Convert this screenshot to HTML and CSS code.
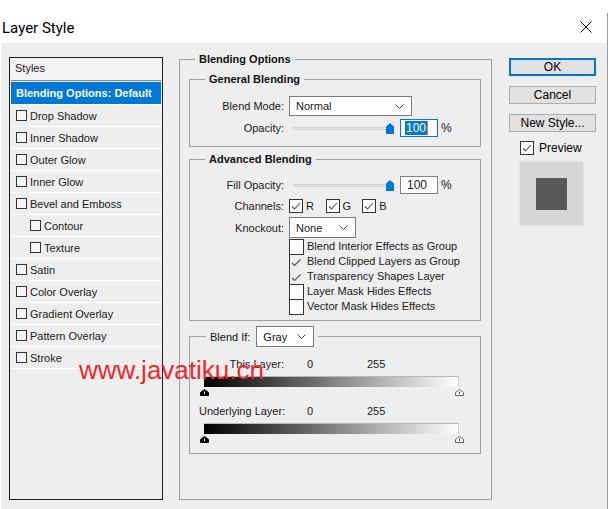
FILE: index.html
```html
<!DOCTYPE html>
<html lang="en">
<head>
    <meta charset="UTF-8">
    <title>Layer Style</title>
    <link rel="stylesheet" href="styles.css">
</head>
<body>
<div class="window">
    <div class="titlebar">
        <span class="title">Layer Style</span>
        <svg class="close" width="12" height="12" viewBox="0 0 12 12"><path d="M0.5 0.5 L11.5 11.5 M11.5 0.5 L0.5 11.5" stroke="#000" stroke-width="1" fill="none"/></svg>
    </div>
    <div class="dialog">
        <div class="styles-panel">
            <div class="styles-head">Styles</div>
            <div class="style-item selected">Blending Options: Default</div>
            <div class="style-item"><span class="box"></span>Drop Shadow</div>
            <div class="style-item"><span class="box"></span>Inner Shadow</div>
            <div class="style-item"><span class="box"></span>Outer Glow</div>
            <div class="style-item"><span class="box"></span>Inner Glow</div>
            <div class="style-item"><span class="box"></span>Bevel and Emboss</div>
            <div class="style-item sub"><span class="box"></span>Contour</div>
            <div class="style-item sub"><span class="box"></span>Texture</div>
            <div class="style-item"><span class="box"></span>Satin</div>
            <div class="style-item"><span class="box"></span>Color Overlay</div>
            <div class="style-item"><span class="box"></span>Gradient Overlay</div>
            <div class="style-item"><span class="box"></span>Pattern Overlay</div>
            <div class="style-item"><span class="box"></span>Stroke</div>
        </div>

        <fieldset class="group outer">
            <legend>Blending Options</legend>

            <fieldset class="group">
                <legend>General Blending</legend>
                <div class="row first h20">
                    <span class="lbl">Blend Mode:</span>
                    <div class="select mode">
                        <span>Normal</span>
                        <svg width="9" height="5" viewBox="0 0 9 5"><path d="M0.5 0.5 L4.5 4.5 L8.5 0.5" stroke="#444" fill="none"/></svg>
                    </div>
                </div>
                <div class="row gap3 h18">
                    <span class="lbl">Opacity:</span>
                    <div class="slider">
                        <div class="track"></div>
                        <svg class="thumb" width="8" height="11" viewBox="0 0 8 11"><path d="M4 0 L8 3.5 L8 11 L0 11 L0 3.5 Z" fill="#0078d7"/></svg>
                    </div>
                    <div class="num focus"><span class="hl">100</span><span class="caret"></span></div>
                    <span class="pct">%</span>
                </div>
            </fieldset>

            <fieldset class="group advanced">
                <legend>Advanced Blending</legend>
                <div class="row first h18">
                    <span class="lbl">Fill Opacity:</span>
                    <div class="slider">
                        <div class="track"></div>
                        <svg class="thumb" width="8" height="11" viewBox="0 0 8 11"><path d="M4 0 L8 3.5 L8 11 L0 11 L0 3.5 Z" fill="#0078d7"/></svg>
                    </div>
                    <div class="num">100</div>
                    <span class="pct">%</span>
                </div>
                <div class="row gap4 h15">
                    <span class="lbl">Channels:</span>
                    <span class="chan"><span class="cb checked"><svg width="12" height="12" viewBox="0 0 12 12"><path d="M2 6.5 L4.5 9 L10 3" stroke="#555" stroke-width="1.1" fill="none"/></svg></span>R</span>
                    <span class="chan"><span class="cb checked"><svg width="12" height="12" viewBox="0 0 12 12"><path d="M2 6.5 L4.5 9 L10 3" stroke="#555" stroke-width="1.1" fill="none"/></svg></span>G</span>
                    <span class="chan"><span class="cb checked"><svg width="12" height="12" viewBox="0 0 12 12"><path d="M2 6.5 L4.5 9 L10 3" stroke="#555" stroke-width="1.1" fill="none"/></svg></span>B</span>
                </div>
                <div class="row gap4 h21">
                    <span class="lbl">Knockout:</span>
                    <div class="select knock">
                        <span>None</span>
                        <svg width="9" height="5" viewBox="0 0 9 5"><path d="M0.5 0.5 L4.5 4.5 L8.5 0.5" stroke="#444" fill="none"/></svg>
                    </div>
                </div>
                <div class="options">
                    <div class="opt"><span class="cb tall"></span>Blend Interior Effects as Group</div>
                    <div class="opt"><span class="cb tall ghost"><svg width="13" height="13" viewBox="0 0 13 13"><path d="M2 7 L4.5 9.5 L10.5 3.5" stroke="#555" stroke-width="1.1" fill="none"/></svg></span>Blend Clipped Layers as Group</div>
                    <div class="opt"><span class="cb tall ghost"><svg width="13" height="13" viewBox="0 0 13 13"><path d="M2 7 L4.5 9.5 L10.5 3.5" stroke="#555" stroke-width="1.1" fill="none"/></svg></span>Transparency Shapes Layer</div>
                    <div class="opt"><span class="cb tall"></span>Layer Mask Hides Effects</div>
                    <div class="opt"><span class="cb tall"></span>Vector Mask Hides Effects</div>
                </div>
            </fieldset>

            <fieldset class="group blendif">
                <legend>
                    <span class="blendif-lbl">Blend If:</span>
                    <span class="select gray">
                        <span>Gray</span>
                        <svg width="9" height="5" viewBox="0 0 9 5"><path d="M0.5 0.5 L4.5 4.5 L8.5 0.5" stroke="#444" fill="none"/></svg>
                    </span>
                </legend>
                <div class="range-row first">
                    <span class="lbl">This Layer:</span>
                    <span class="v0">0</span>
                    <span>255</span>
                </div>
                <div class="ramp"></div>
                <div class="tris">
                    <svg width="9" height="7" viewBox="0 0 9 7"><path d="M4.5 0.5 L8.5 3.5 L8.5 6.5 L0.5 6.5 L0.5 3.5 Z" fill="#000" stroke="#000"/><path d="M4.5 2.5 V5" stroke="#fff"/></svg>
                    <svg width="9" height="7" viewBox="0 0 9 7"><path d="M4.5 0.5 L8.5 3.5 L8.5 6.5 L0.5 6.5 L0.5 3.5 Z" fill="#fff" stroke="#666"/><path d="M4.5 2.5 V5" stroke="#444"/></svg>
                </div>
                <div class="range-row">
                    <span class="lbl">Underlying Layer:</span>
                    <span class="v0">0</span>
                    <span>255</span>
                </div>
                <div class="ramp"></div>
                <div class="tris">
                    <svg width="9" height="7" viewBox="0 0 9 7"><path d="M4.5 0.5 L8.5 3.5 L8.5 6.5 L0.5 6.5 L0.5 3.5 Z" fill="#000" stroke="#000"/><path d="M4.5 2.5 V5" stroke="#fff"/></svg>
                    <svg width="9" height="7" viewBox="0 0 9 7"><path d="M4.5 0.5 L8.5 3.5 L8.5 6.5 L0.5 6.5 L0.5 3.5 Z" fill="#fff" stroke="#666"/><path d="M4.5 2.5 V5" stroke="#444"/></svg>
                </div>
            </fieldset>
        </fieldset>

        <div class="side">
            <div class="btn default">OK</div>
            <div class="btn">Cancel</div>
            <div class="btn">New Style...</div>
            <div class="preview-row">
                <span class="cb checked"><svg width="12" height="12" viewBox="0 0 12 12"><path d="M2 6.5 L4.5 9 L10 3" stroke="#555" stroke-width="1.1" fill="none"/></svg></span>
                Preview
            </div>
            <div class="swatch"><div class="swatch-inner"></div></div>
        </div>
    </div>
    <div class="watermark">www.javatiku.cn</div>
</div>
</body>
</html>
```

FILE: styles.css
```css
body {
    margin: 0;
    background: #fff;
    font-family: "Liberation Sans", Arial, sans-serif;
    font-size: 11px;
    color: #1a1a1a;
}
.window {
    position: relative;
    width: 607px;
    margin-top: 13px;
    border-right: 1px solid #9a9a9a;
}
.titlebar {
    height: 30px;
    display: flex;
    justify-content: space-between;
    align-items: center;
    padding: 0 15px 0 2px;
}
.title {
    font-family: Roboto, sans-serif;
    font-size: 15px;
    line-height: 30px;
    color: #000;
}
.close {
    margin-bottom: 2px;
}
.dialog {
    margin-left: 1px;
    height: 466px;
    box-sizing: border-box;
    padding: 0 0 9px 8px;
    background: #eeeeee;
    display: flex;
    align-items: stretch;
}

/* styles list */
.styles-panel {
    width: 154px;
    box-sizing: border-box;
    margin-top: 14px;
    border: 1px solid #1e1e1e;
    padding: 0 1px;
}
.styles-head {
    height: 22px;
    line-height: 21px;
    padding-left: 4px;
    border-bottom: 1px solid #8a8a8a;
    margin-bottom: 1px;
    background: #f2f2f2;
}
.style-item {
    height: 21px;
    border-bottom: 1px solid #fff;
    display: flex;
    align-items: center;
    padding-left: 5px;
    white-space: nowrap;
}
.style-item.selected {
    height: 22px;
    background: #0078d7;
    color: #fff;
    font-weight: bold;
}
.style-item.sub {
    padding-left: 19px;
}
.box {
    width: 11px;
    height: 11px;
    box-sizing: border-box;
    border: 1px solid #333;
    background: #f6f6f6;
    margin-right: 3px;
}

/* group boxes */
.group {
    margin: 0;
    padding: 0 9px;
    border: 1px solid #a0a0a0;
    min-width: 0;
}
.group legend {
    padding: 0 4px;
    margin-left: 6px;
    font-weight: bold;
    line-height: 13px;
    color: #111;
}
.outer {
    width: 313px;
    box-sizing: border-box;
    margin: 10px 0 0 16px;
    padding: 0 10px 0 9px;
}
.outer > .group {
    margin-top: 7px;
    padding-bottom: 9px;
}
.outer > .advanced {
    margin-top: 6px;
    padding-bottom: 6px;
}
.outer > .blendif {
    margin-top: 5px;
    padding-bottom: 10px;
}

.row {
    display: flex;
    align-items: center;
}
.row.first { margin-top: 10px; }
.row.gap3 { margin-top: 3px; }
.row.gap4 { margin-top: 4px; }
.h15 { height: 15px; }
.h18 { height: 18px; }
.h20 { height: 20px; }
.h21 { height: 21px; }
.lbl {
    width: 85px;
    text-align: right;
    margin-right: 5px;
    flex: none;
    white-space: nowrap;
}

.select {
    display: flex;
    align-items: center;
    justify-content: space-between;
    box-sizing: border-box;
    height: 100%;
    padding: 0 7px 0 6px;
    background: #fff;
    border: 1px solid #7a7a7a;
    font-size: 11px;
}
.select.mode { width: 123px; }
.select.knock { width: 67px; }

.slider {
    position: relative;
    width: 101px;
    height: 11px;
    margin-left: 4px;
    display: flex;
    align-items: center;
}
.track {
    width: 96px;
    height: 3px;
    background: #e4e4e4;
    border: 1px solid #d2d2d2;
    box-sizing: border-box;
}
.thumb {
    position: absolute;
    right: 0;
    top: 0;
}
.num {
    width: 38px;
    height: 18px;
    box-sizing: border-box;
    margin-left: 6px;
    padding-left: 6px;
    border: 1px solid #828282;
    background: #fff;
    font-size: 12px;
    line-height: 16px;
    display: flex;
    align-items: center;
}
.num.focus {
    border-color: #0078d7;
    padding-left: 4px;
}
.hl {
    background: #0078d7;
    color: #fff;
    padding: 0 1px;
    line-height: 14px;
}
.caret {
    width: 1px;
    height: 14px;
    background: #e8741c;
}
.pct {
    margin-left: 3px;
    font-size: 12px;
}

.cb {
    width: 14px;
    height: 14px;
    box-sizing: border-box;
    border: 1px solid #333;
    background: #fff;
    display: inline-flex;
    align-items: center;
    justify-content: center;
    flex: none;
}
.chan {
    width: 36.6px;
    display: flex;
    align-items: center;
}
.chan .cb {
    margin-right: 3px;
}

.options {
    margin-top: 1px;
    padding-left: 90px;
}
.opt {
    height: 15px;
    display: flex;
    align-items: flex-start;
    line-height: 15px;
}
.cb.tall {
    width: 15px;
    height: 16px;
    margin-bottom: -1px;
    margin-right: 3px;
}
.cb.ghost {
    border-color: transparent transparent transparent #333;
    background: transparent;
}

/* blend if */
.blendif legend {
    font-weight: normal;
    line-height: normal;
    margin-left: 7px;
    display: flex;
    align-items: center;
}
.blendif-lbl {
    margin-right: 6px;
}
.select.gray {
    width: 58px;
    height: 21px;
}
.range-row {
    display: flex;
    height: 13px;
    line-height: 13px;
    margin-top: 9px;
}
.range-row.first {
    margin-top: 11px;
}
.range-row .v0 {
    margin-left: 18px;
    width: 60px;
}
.ramp {
    width: 255px;
    height: 11px;
    box-sizing: border-box;
    margin: 5px 0 0 5px;
    border-top: 1px solid #b8b8b8;
    border-right: 1px solid #cfcfcf;
    background: linear-gradient(to right, #000, #fff);
}
.tris {
    display: flex;
    justify-content: space-between;
    width: 264px;
    height: 7px;
    margin: 2px 0 0 1px;
}

/* right column */
.side {
    margin: 15px 0 0 17px;
    width: 87px;
    display: flex;
    flex-direction: column;
    align-items: flex-start;
}
.btn {
    width: 87px;
    height: 18px;
    box-sizing: border-box;
    border: 1px solid #adadad;
    background: #e1e1e1;
    font-size: 12px;
    color: #000;
    display: flex;
    align-items: center;
    justify-content: center;
    margin-bottom: 10px;
}
.btn.default {
    border: 2px solid #0078d7;
}
.preview-row {
    display: flex;
    align-items: center;
    height: 14px;
    margin: -1px 0 0 11px;
    font-size: 12px;
    color: #000;
}
.preview-row .cb {
    margin-right: 5px;
}
.swatch {
    width: 65px;
    height: 65px;
    box-sizing: border-box;
    margin: 6px 0 0 10px;
    background: #d6d6d6;
    border: 1px solid #e6e6e6;
    display: flex;
    align-items: center;
    justify-content: center;
}
.swatch-inner {
    width: 31px;
    height: 32px;
    background: #595959;
}

.watermark {
    position: absolute;
    left: 79px;
    top: 342px;
    font-size: 26px;
    line-height: 30px;
    color: #f2262b;
}
```
